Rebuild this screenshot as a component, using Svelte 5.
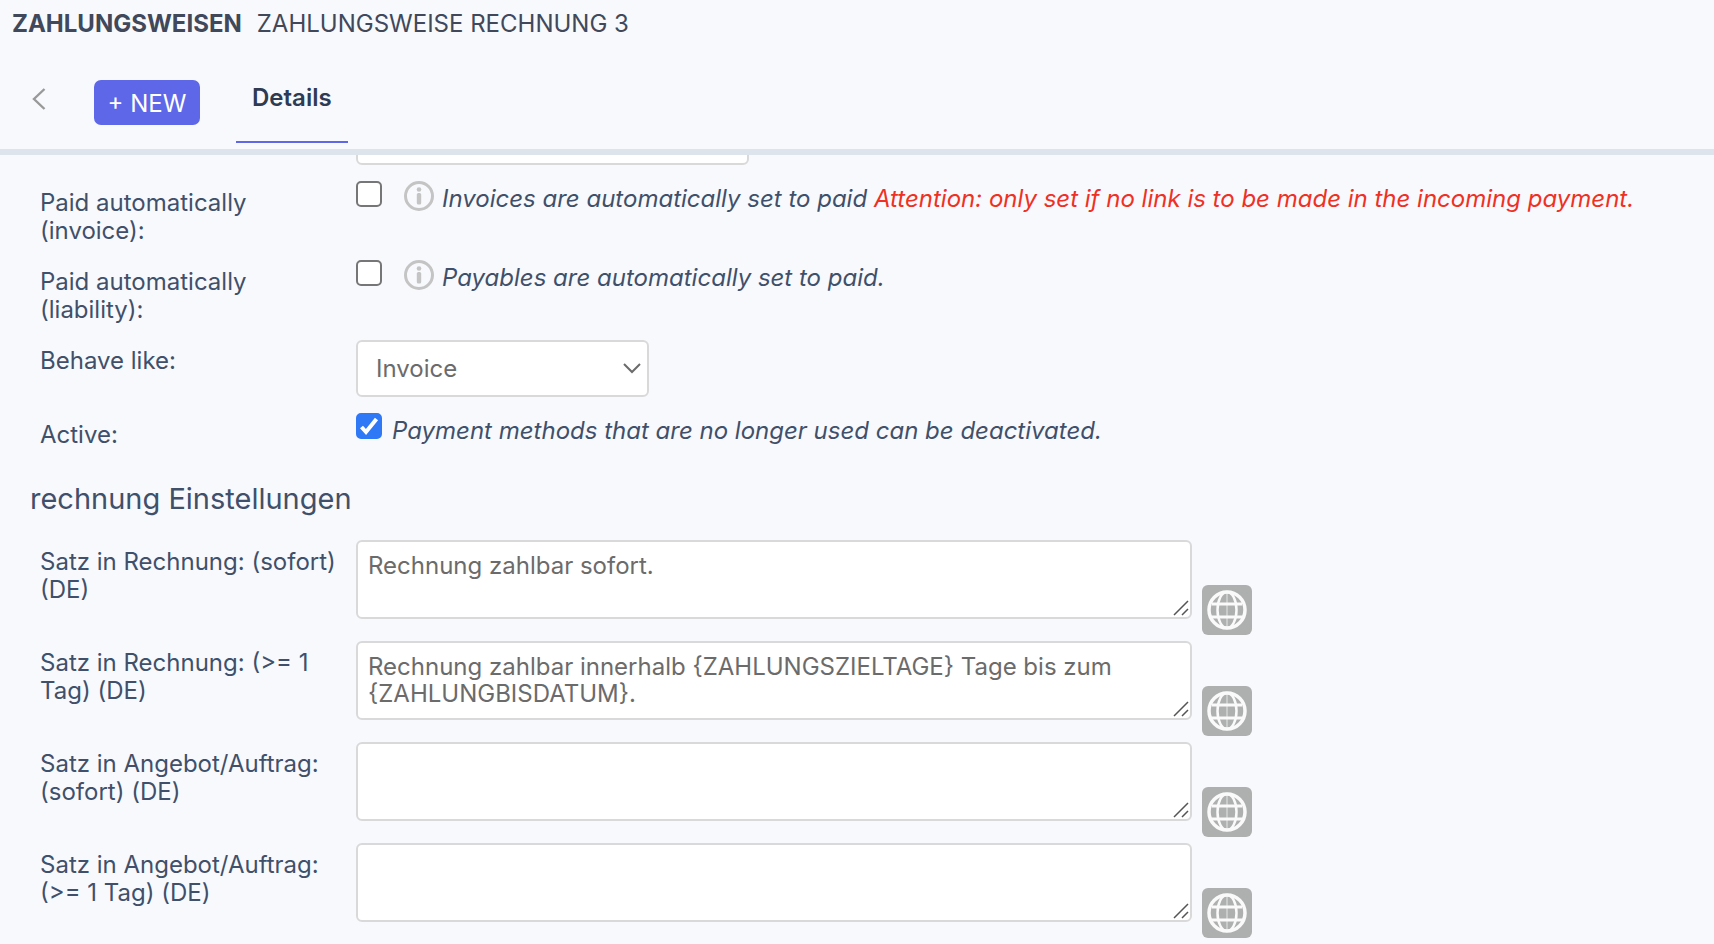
<script>
    let title = ''
    let autoInvoice = false
    let autoLiability = false
    let behave = 'rechnung'
    let active = true
    let more = false

    let texts = [
        { id: 'invoiceNow', label: 'Satz in Rechnung: (sofort) (DE)', value: 'Rechnung zahlbar sofort.' },
        { id: 'invoiceDays', label: 'Satz in Rechnung: (>= 1 Tag) (DE)', value: 'Rechnung zahlbar innerhalb {ZAHLUNGSZIELTAGE} Tage bis zum {ZAHLUNGBISDATUM}.' },
        { id: 'offerNow', label: 'Satz in Angebot/Auftrag: (sofort) (DE)', value: '' },
        { id: 'offerDays', label: 'Satz in Angebot/Auftrag: (>= 1 Tag) (DE)', value: '' }
    ]
</script>

<div class="page">
    <header>
        <h1><strong>ZAHLUNGSWEISEN</strong> <span>ZAHLUNGSWEISE RECHNUNG 3</span></h1>
        <nav>
            <a class="back" href="#list" aria-label="Back">
                <svg width="14" height="22" viewBox="0 0 14 22">
                    <path d="M12.5 1 2 11l10.500 10" fill="none" stroke="#999" stroke-width="2.400"/>
                </svg>
            </a>
            <button class="new" type="button">+ NEW</button>
            <a class="tab" href="#details">Details</a>
        </nav>
    </header>

    <main>
        <form>
            <div class="row first">
                <span></span>
                <input class="text" type="text" aria-label="Title" bind:value={title}/>
            </div>
            <div class="row">
                <label for="autoInvoice">Paid automatically (invoice):</label>
                <div class="field">
                    <input id="autoInvoice" type="checkbox" bind:checked={autoInvoice}/>
                    <svg class="info" viewBox="0 0 30 30">
                        <circle cx="15" cy="15" r="13.500" fill="none" stroke="#c4c4c4" stroke-width="3"/>
                        <circle cx="15" cy="8.500" r="2.300" fill="#c4c4c4"/>
                        <rect x="12.800" y="12" width="4.400" height="11.500" rx="1.500" fill="#c4c4c4"/>
                    </svg>
                    <i>Invoices are automatically set to paid <span class="warn">Attention: only set if no link is to be made in the incoming payment.</span></i>
                </div>
            </div>
            <div class="row">
                <label for="autoLiability">Paid automatically (liability):</label>
                <div class="field">
                    <input id="autoLiability" type="checkbox" bind:checked={autoLiability}/>
                    <svg class="info" viewBox="0 0 30 30">
                        <circle cx="15" cy="15" r="13.500" fill="none" stroke="#c4c4c4" stroke-width="3"/>
                        <circle cx="15" cy="8.500" r="2.300" fill="#c4c4c4"/>
                        <rect x="12.800" y="12" width="4.400" height="11.500" rx="1.500" fill="#c4c4c4"/>
                    </svg>
                    <i>Payables are automatically set to paid.</i>
                </div>
            </div>
            <div class="row">
                <label for="behave">Behave like:</label>
                <div class="select">
                    <select id="behave" bind:value={behave}>
                        <option value="rechnung">Invoice</option>
                    </select>
                    <svg width="18" height="11" viewBox="0 0 18 11">
                        <path d="M1 1l8 8 8-8" fill="none" stroke="#6b6b6b" stroke-width="2"/>
                    </svg>
                </div>
            </div>
            <div class="row">
                <label for="active">Active:</label>
                <div class="field">
                    <input id="active" type="checkbox" bind:checked={active}/>
                    <i>Payment methods that are no longer used can be deactivated.</i>
                </div>
            </div>
        </form>

        <h2>rechnung Einstellungen</h2>

        <form class="texts">
            {#each texts as item}
                <div class="row">
                    <label for={item.id}>{item.label}</label>
                    <div class="area">
                        <div class="box">
                            <textarea id={item.id} bind:value={item.value}></textarea>
                            <svg class="grip" width="16" height="16" viewBox="0 0 16 16">
                                <path d="M1 15 15 1M9 15l6-6" fill="none" stroke="#555" stroke-width="1.500"/>
                            </svg>
                        </div>
                        <button class="globe" type="button" aria-label="Translate">
                            <svg width="40" height="40" viewBox="0 0 40 40" fill="none" stroke="#fafafa">
                                <circle cx="20" cy="20" r="18" stroke-width="3.500"/>
                                <ellipse cx="20" cy="20" rx="9.500" ry="18" stroke-width="2.500"/>
                                <path d="M20 2v36" stroke-width="1.500" opacity="0.500"/>
                                <path d="M5 14h30M4 27h32" stroke-width="3"/>
                            </svg>
                        </button>
                    </div>
                </div>
            {/each}
            <div class="row">
                <span></span>
                <input type="checkbox" aria-label="More" bind:checked={more}/>
            </div>
        </form>
    </main>
</div>

<style>
    :global(body) {
        background-color: #f8f9fd;
    }

    .page {
        display: flex;
        flex-direction: column;
        height: 100vh;
        overflow: hidden;
        color: #40506a;
        font-family: Inter, sans-serif;
        font-size: 24px;
        line-height: 28px;
    }

    header {
        border-bottom: 6px solid #dde4ec;
        padding: 10px 12px 0;
    }

    h1 {
        display: flex;
        gap: 15px;
        margin: 0;
        color: #40485a;
        font-size: 24px;
        font-weight: 400;
    }

    nav {
        display: flex;
        align-items: flex-start;
        padding: 34px 0 6px;
    }

    .back {
        margin: 16px 48px 0 20px;
        height: 22px;
        line-height: 0;
    }

    .new {
        margin: 8px 36px 0 0;
        width: 106px;
        height: 45px;
        padding: 2px 0 0;
        border: 0;
        border-radius: 7px;
        background-color: #5d67e8;
        color: #fff;
        font: inherit;
        cursor: pointer;
    }

    .tab {
        padding: 12px 16px 29px;
        border-bottom: 2px solid #5d67e8;
        color: #2e3b52;
        font-weight: 600;
        text-decoration: none;
    }

    main {
        flex: 1;
        min-height: 0;
        overflow: hidden;
    }

    form {
        display: flex;
        flex-direction: column;
        gap: 15px;
        margin-top: -47px;
    }

    .texts {
        gap: 6px;
        margin-top: 0;
    }

    .row {
        display: grid;
        grid-template-columns: 300px 1fr;
        column-gap: 16px;
        padding: 0 12px 0 40px;
    }

    .first {
        padding-bottom: 1px;
    }

    label {
        padding-top: 8px;
    }

    .field {
        display: flex;
        align-items: flex-start;
    }

    i {
        padding-top: 4px;
    }

    .warn {
        color: #ee3124;
    }

    .info {
        flex: none;
        width: 30px;
        height: 30px;
        margin: 0 8px 0 12px;
    }

    input[type="checkbox"] {
        flex: none;
        appearance: none;
        box-sizing: border-box;
        width: 26px;
        height: 26px;
        margin: 0 10px 0 0;
        border: 2px solid #767676;
        border-radius: 5px;
        background-color: #fff;
    }

    input[type="checkbox"]:checked {
        border-color: #2f78f6;
        background: #2f78f6 url("data:image/svg+xml,%3Csvg xmlns='http://www.w3.org/2000/svg' viewBox='0 0 22 22'%3E%3Cpath d='M3.500 12l4.500 5L18.500 4' fill='none' stroke='white' stroke-width='4'/%3E%3C/svg%3E") center / 22px no-repeat;
    }

    .text, select, textarea {
        box-sizing: border-box;
        border: 2px solid #d9d9d9;
        border-radius: 6px;
        background-color: #fff;
        color: #6b6b6b;
        font: inherit;
        outline: none;
    }

    .text {
        width: 393px;
        height: 57px;
        padding: 0 10px;
    }

    .select {
        position: relative;
        width: 293px;
        padding: 1px 0;
    }

    select {
        display: block;
        appearance: none;
        width: 100%;
        height: 57px;
        padding: 0 40px 0 18px;
    }

    .select svg {
        position: absolute;
        right: 8px;
        top: 24px;
        pointer-events: none;
    }

    h2 {
        margin: 32px 30px 23px;
        font-size: 29px;
        font-weight: 400;
        line-height: 36px;
    }

    .area {
        display: flex;
        align-items: flex-end;
        gap: 10px;
    }

    .box {
        position: relative;
        flex: 0 1 836px;
        margin-bottom: 16px;
    }

    textarea {
        display: block;
        width: 100%;
        height: 79px;
        padding: 10px;
        line-height: 27px;
        resize: none;
        overflow: hidden;
    }

    .grip {
        position: absolute;
        right: 3px;
        bottom: 3px;
        pointer-events: none;
    }

    .globe {
        display: flex;
        align-items: center;
        justify-content: center;
        width: 50px;
        height: 50px;
        padding: 0;
        border: 0;
        border-radius: 6px;
        background-color: #aeb0af;
        cursor: pointer;
    }
</style>
